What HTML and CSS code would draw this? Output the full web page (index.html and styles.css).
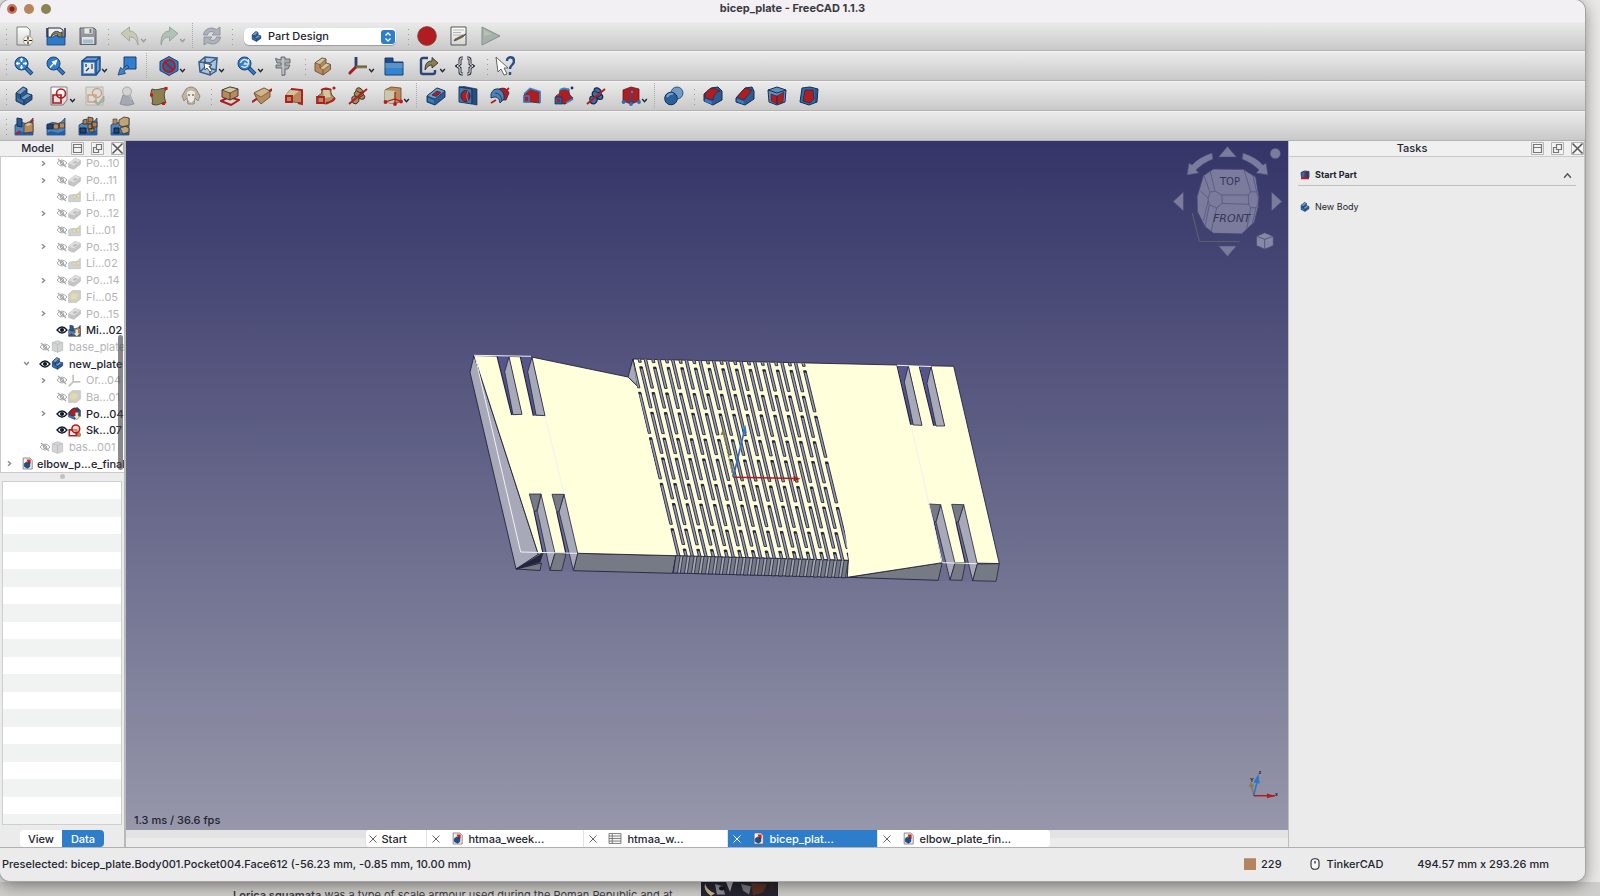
FILE: index.html
```html
<!DOCTYPE html>
<html lang="en">
<head>
<meta charset="utf-8">
<title>bicep_plate - FreeCAD 1.1.3</title>
<link rel="stylesheet" href="styles.css">
</head>
<body>
<svg class="defs" aria-hidden="true">
  <defs>
    <linearGradient id="paper" x1="0" y1="0" x2="0" y2="1"><stop offset="0" stop-color="#fff"/><stop offset="1" stop-color="#d4d4d4"/></linearGradient>
    <linearGradient id="metal" x1="0" y1="0" x2="0" y2="1"><stop offset="0" stop-color="#a2a5ad"/><stop offset="1" stop-color="#85888f"/></linearGradient>
    <symbol id="i-chev" viewBox="0 0 6 6"><path d="M1 1.700L3 4l2-2.300" fill="none" stroke="currentColor" stroke-width="1.200"/></symbol>
    <symbol id="i-x" viewBox="0 0 8 8"><path d="M.500.500l7 7M7.500.500l-7 7" fill="none" stroke="currentColor"/></symbol>
    <symbol id="i-new" viewBox="0 0 20 20"><path d="M3 1h10l3 3v15H3z" fill="url(#paper)" stroke="#666" stroke-width=".8"/><circle cx="14" cy="14.500" r="4.600" fill="#f5f3e6" stroke="#777" stroke-width=".5"/><path d="M14 10.500v8M10 14.500h8" stroke="#222" stroke-width="1.200"/><circle cx="14" cy="14.500" r="1.300" fill="#d9c98a"/></symbol>
    <symbol id="i-open" viewBox="0 0 20 20"><path d="M2 2h12l3 2v9H2z" fill="#eee" stroke="#1f2c48"/><path d="M5 11C6 5 12 4 14 7l2-1v6l-5-2 1-1c-2-2-4-1-7 2z" fill="#8d8352" stroke="#222" stroke-width=".7"/><path d="M1 11h6l2-1.500h2L12 11h7v8H1z" fill="#2c7bc8" stroke="#1f3e6a" stroke-width=".8"/><path d="M1 2v9M19 2v9" stroke="#1f2c48" stroke-width="1.500"/></symbol>
    <symbol id="i-save" viewBox="0 0 20 20"><path d="M2 2h14l2 2v14.500H2z" fill="url(#metal)" stroke="#5c6068"/><path d="M6 2h9v6H6z" fill="#e8e8e8" stroke="#777" stroke-width=".5"/><path d="M11.500 3h2v4h-2z" fill="#777"/><path d="M4 11h12v7H4z" fill="#dfe3e6"/><path d="M5 13.500h10v4H5z" fill="#a7bccb"/></symbol>
    <symbol id="i-undo" viewBox="0 0 20 20"><path d="M1 7.500L9.500 1v4c5 0 9 4 8.500 14-1.500-6-4-8-8.500-8v4z" fill="#c8cbb4" stroke="#9a9d90" stroke-width=".8"/></symbol>
    <symbol id="i-redo" viewBox="0 0 20 20"><path d="M19 7.500L10.500 1v4C5.500 5 1.500 9 2 19c1.500-6 4-8 8.500-8v4z" fill="#b0c2b7" stroke="#8e9a92" stroke-width=".8"/></symbol>
    <symbol id="i-refresh" viewBox="0 0 20 20"><path d="M1.500 9C2 3 9 0 14.500 3.500L18 1v8h-8l2.500-2.500C9 5 6.500 5.500 5.500 9zM18.500 11c-.5 6-7.500 9-13 5.500L2 19v-8h8l-2.500 2.500c3.500 1.500 6 1 7-2.500z" fill="#adb2bd" stroke="#858b98" stroke-width=".8"/></symbol>
    <symbol id="i-record" viewBox="0 0 20 20"><circle cx="10" cy="10" r="9.400" fill="#b01d20" stroke="#7c4546" stroke-width=".8"/></symbol>
    <symbol id="i-macro" viewBox="0 0 20 20"><path d="M2 1h15v18H2z" fill="url(#paper)" stroke="#555"/><path d="M4 4h11M4 6.500h8M4 9h10" stroke="#b5b5b5"/><path d="M6 13l6-3 5-2-3 3-6 3-3 1z" fill="#8a6b35" stroke="#222" stroke-width=".5"/></symbol>
    <symbol id="i-play" viewBox="0 0 20 20"><path d="M1 1l18 9L1 19z" fill="#a4b2ab" stroke="#84908a"/><path d="M3 4l8 4-8 2z" fill="#c0c0aa"/></symbol>
    <symbol id="i-lens" viewBox="0 0 20 20"><path d="M12 12l6 6" stroke="#1e3d6b" stroke-width="4"/><path d="M12 12l5.500 5.500" stroke="#2f7fce" stroke-width="2.400"/><circle cx="7.500" cy="7.500" r="6.500" fill="#2f7fce" stroke="#1e3d6b"/></symbol>
    <symbol id="i-fit" viewBox="0 0 20 20"><use href="#i-lens"/><path d="M7.500 2v11M2 7.500h11" stroke="#fff" stroke-width="1.400"/><path d="M7.500 1.800l2 2.400h-4zM7.500 13.200l2-2.400h-4zM1.800 7.500l2.400-2v4zM13.200 7.500l-2.400-2v4z" fill="#fff"/><path d="M6 6h3v3H6z" fill="#2f7fce"/></symbol>
    <symbol id="i-fitsel" viewBox="0 0 20 20"><use href="#i-lens"/><path d="M11.500 3.500L9.500 9.500 8 8l-3.500 4-1-1L7 7.200 5.500 5.700z" fill="#fff"/></symbol>
    <symbol id="i-sync" viewBox="0 0 20 20"><use href="#i-lens"/><path d="M3.500 7a4 4 0 0 1 7-2l1-1v4h-4l1-1.500M11 9a4 4 0 0 1-6.500 1" fill="none" stroke="#dbe9f5" stroke-width="1.500"/></symbol>
    <symbol id="i-viewcube" viewBox="0 0 20 20"><path d="M1 5l5-4h13v13l-5 5H1z" fill="#5f9bd4"/><path d="M3 7h10v10H3z" fill="#dfe6ee"/><path d="M1 5h14v14H1zM1 5l5-4h13v13l-4 5M15 5l4-4" fill="none" stroke="#1f4a86" stroke-width="1.500"/><path d="M5 15l3-3m3-4v5M5 8v3" stroke="#333" stroke-width="1.200"/></symbol>
    <symbol id="i-linkview" viewBox="0 0 20 20"><path d="M7 1h12v12H7z" fill="#2f7fce" stroke="#1e3d6b"/><path d="M10 9l-4.500 4-2-1.500L1 19l7.500-1.500L7 15l5-4z" fill="#3c86c9" stroke="#1e3d6b" stroke-width=".8"/></symbol>
    <symbol id="i-style" viewBox="0 0 20 20"><path d="M10 .500l9 5v9l-9 5-9-5v-9z" fill="#2f7fce" stroke="#1e3d6b"/><circle cx="10" cy="10" r="6" fill="#2b63a0" stroke="#b01d20" stroke-width="1.800"/><path d="M6 6l8 8" stroke="#b01d20" stroke-width="2"/></symbol>
    <symbol id="i-selcube" viewBox="0 0 20 20"><path d="M1 6l6-5 12 1-1 13-7 4-9-3z" fill="#a9c4de"/><path d="M1 6l11 1v12l-10-3zM1 6l6-5 12 1-7 5M19 2l-1 13-6 4M7 1v10l-5 5M7 11l11 3" fill="none" stroke="#3a5f90" stroke-width="1.500"/><path d="M6 7l8 2-3 1.500 3 4-2 1.500-3-4-2 2z" fill="#fff" stroke="#222" stroke-width=".7"/></symbol>
    <symbol id="i-caliper" viewBox="0 0 20 20"><path d="M8 1h4v2h5v4h-5v2h5l-2 4h-3v6l-3 .5V12H3V9h5V7H4L2.500 2.500 8 4z" fill="#a9abae" stroke="#5f6267" stroke-width=".9"/><path d="M10 2v16" stroke="#d5d6d8"/></symbol>
    <symbol id="i-part" viewBox="0 0 20 20"><path d="M2 7l7-5 4 1v4l4.500 1.500v5L10 19l-8-4z" fill="#b98a5c" stroke="#5c4830" stroke-width=".8"/><path d="M2 7l7-5 4 1-6 5.500zM7 12l6-5 4.500 1.500L10 14z" fill="#d0c49c" stroke="#5c4830" stroke-width=".6"/><path d="M7 8.500V12M10 14v5" stroke="#5c4830" stroke-width=".8"/></symbol>
    <symbol id="i-axis" viewBox="0 0 20 20"><path d="M8 1v10" stroke="#2b4a7c" stroke-width="2.400"/><path d="M8 11h11" stroke="#7f7747" stroke-width="2.600"/><path d="M8 11l-7 7" stroke="#b01d20" stroke-width="2.600"/><path d="M7 1v9.500L1 16M9 1v9h10" stroke="#333" stroke-width=".5" fill="none"/></symbol>
    <symbol id="i-folder" viewBox="0 0 20 20"><path d="M1 2h8v4h10v13H1z" fill="#1d4c88" stroke="#1d3a66"/><path d="M1.500 7h17v11.500h-17z" fill="#2e86d2"/><path d="M1.500 7h17v5h-17z" fill="#5a92c6"/></symbol>
    <symbol id="i-export" viewBox="0 0 20 20"><path d="M9 2H4Q2 2 2 4v12q0 2 2 2h10q2 0 2-2v-2" fill="none" stroke="#2a4877" stroke-width="2.400"/><path d="M6 14c0-6 2-9 7-9V1.500L19 7l-6 5V9c-3 0-5 2-7 5z" fill="#8a8050" stroke="#222" stroke-width=".8"/></symbol>
    <symbol id="i-braces" viewBox="0 0 20 20"><path d="M8 2H7Q5 2 5 4v4l-3 2 3 2v4q0 2 2 2h1M12 2h1q2 0 2 2v4l3 2-3 2v4q0 2-2 2h-1" fill="none" stroke="#2d3242" stroke-width="3"/><path d="M8 2H7Q5 2 5 4v4l-3 2 3 2v4q0 2 2 2h1M12 2h1q2 0 2 2v4l3 2-3 2v4q0 2-2 2h-1" fill="none" stroke="#eceef2" stroke-width="1"/></symbol>
    <symbol id="i-whats" viewBox="0 0 20 20"><path d="M12 5c0-5 7-5 7 0 0 4-4 4-4 8M15 16v3" fill="none" stroke="#2a4e86" stroke-width="2.400"/><path d="M1 1l12 11H9l3 6-3 1-3-6-3 3z" fill="#fff" stroke="#555" stroke-width=".9"/></symbol>
    <symbol id="i-body" viewBox="0 0 20 20"><path d="M2 7l7-6 4 2v4.500L18 9v4.500L10 19l-8-4z" fill="#2c5a92" stroke="#1b2d4d" stroke-width=".9"/><path d="M2 7l7-6 4 2-6.500 5.500zM6.500 12l6.500-4.500L18 9l-8 5z" fill="#6f9cc9" stroke="#1b2d4d" stroke-width=".7"/><path d="M6.500 8.500V12M10 14v5" fill="none" stroke="#1b2d4d" stroke-width=".8"/><path d="M3 12l6 3.500V17l-6-3z" fill="#2f7fce"/></symbol>
    <symbol id="i-sketch" viewBox="0 0 20 20"><path d="M2 1h16v13l-4 5H2z" fill="url(#paper)" stroke="#666" stroke-width=".8"/><path d="M4 9h8v8H4z" fill="none" stroke="#b01d20" stroke-width="1.700"/><circle cx="12" cy="7.500" r="4.500" fill="none" stroke="#b01d20" stroke-width="1.600"/></symbol>
    <symbol id="i-valid" viewBox="0 0 20 20"><path d="M1 1h17v18H1z" fill="#dcdcd6" stroke="#aaa" stroke-width=".8"/><path d="M3 9h8v7H3z" fill="none" stroke="#cf9f85" stroke-width="1.400"/><circle cx="12" cy="7" r="4.500" fill="none" stroke="#cf9f85" stroke-width="1.400"/><path d="M10 14l3 3 6-7v5l-6 4-4-3z" fill="#a3b8a2" stroke="#8b9a8b" stroke-width=".6"/></symbol>
    <symbol id="i-check" viewBox="0 0 20 20"><path d="M6 9L3 18q7 3 14 0L13 9z" fill="#a2a8b4" stroke="#868c98" stroke-width=".8"/><circle cx="10" cy="5.500" r="4.500" fill="#d3d3cf" stroke="#999" stroke-width=".8"/><path d="M12 9l3 5" stroke="#b5b5ae" stroke-width="1.500"/></symbol>
    <symbol id="i-map" viewBox="0 0 20 20"><path d="M3 3c5 2 9-1 15-1-4 5-3 9-1 15-5-1-8 4-14 1C5 12 0 9 3 3z" fill="#8a8050" stroke="#4d4830"/><path d="M15.500 1h3v3h-3zM1 7.500h3v3H1zM13 16h3v3h-3z" fill="#c4161c"/></symbol>
    <symbol id="i-clone" viewBox="0 0 20 20"><path d="M5 3q5-4 10 0l4 7-2 5-3-3-1 6H7l-1-6-3 3-2-5z" fill="#c5b39c" stroke="#8f8a84" stroke-width="1"/><path d="M6 6q4-3 8 0l-1 8-3 3-3-3z" fill="#eceae4"/><circle cx="8" cy="9" r=".9" fill="#666"/><circle cx="12" cy="9" r=".9" fill="#666"/></symbol>
    <symbol id="i-pad" viewBox="0 0 20 20"><path d="M1 15l8-4 10 3-8 5z" fill="none" stroke="#b01d20" stroke-width="2"/><path d="M2 4l8-3 8 2v7l-8 4-8-3z" fill="#b98a5c" stroke="#3c3020" stroke-width=".9"/><path d="M2 4l8-3 8 2-8 4z" fill="#d0c9a5" stroke="#3c3020" stroke-width=".7"/><path d="M10 7v7" stroke="#3c3020" stroke-width=".8"/></symbol>
    <symbol id="i-revolve" viewBox="0 0 20 20"><path d="M0 16L20 4" stroke="#b01d20" stroke-width="1.800"/><path d="M2 7l10-5 6 3v6l-9 7q-4-3-7-11z" fill="#b98a5c" stroke="#5c4830" stroke-width=".8"/><path d="M2 7l10-5 6 3-9 6z" fill="#d0b48a" stroke="#5c4830" stroke-width=".6"/><path d="M4 13l-4 3M17 5l3-2" stroke="#b01d20" stroke-width="1.800"/></symbol>
    <symbol id="i-loft" viewBox="0 0 20 20"><path d="M2 9l5-6 11 1v13l-9-1H2z" fill="#b98a5c" stroke="#5c4830" stroke-width=".8"/><path d="M2 9l5-6 9 1-7 6z" fill="#cfc6a0"/><path d="M2 10h6v6H2zM7 3l11 1v14l-4-1" fill="none" stroke="#b01d20" stroke-width="1.900"/></symbol>
    <symbol id="i-pipe" viewBox="0 0 20 20"><path d="M2 10q5-2 4-6l9-1q-1 6 4 9l-8 6-9-1z" fill="#b98a5c" stroke="#3c3020" stroke-width=".8"/><path d="M7 4l7 0q-1 4 1 7l-7 1z" fill="#cfc6a0"/><path d="M1 11h7v6H1zM5 4q5-3 10 0M10 17q7-1 9-5" fill="none" stroke="#b01d20" stroke-width="1.800"/><circle cx="18" cy="2" r="1.600" fill="#b01d20"/></symbol>
    <symbol id="i-helix" viewBox="0 0 20 20"><path d="M8 5q0-4 4-3 4 2 3 6 3 2 1 5-3 1-5-1 1 4-3 6-4 0-4-4-1-4 3-4-2-3 1-5z" fill="#a8855a" stroke="#3c3020"/><path d="M7 10q4 3 8-1M9 5q3 3 5 1" stroke="#3c3020" fill="none"/><path d="M1 18L19 3" stroke="#b01d20" stroke-width="1.900"/></symbol>
    <symbol id="i-prim" viewBox="0 0 20 20"><path d="M2 4l6-3 10 1v13l-6 3-10-2z" fill="#b98a5c" stroke="#5c4830" stroke-width=".8"/><path d="M2 4l10 1v13l-10-2z" fill="#c9c8ad"/><path d="M12 6v12M2 16l10-3 7 3" stroke="#b01d20" stroke-width="1.300" fill="none"/><circle cx="2.500" cy="16" r="1.900" fill="#c4161c"/><circle cx="12" cy="18" r="1.900" fill="#c4161c"/><circle cx="18" cy="15.500" r="1.900" fill="#c4161c"/></symbol>
    <symbol id="i-pocket" viewBox="0 0 20 20"><path d="M1 10l10-8 8 3v6l-10 8-8-3z" fill="#2c5a92" stroke="#1b2d4d" stroke-width=".9"/><path d="M1 10l10-8 8 3-10 8z" fill="#6f9cc9" stroke="#1b2d4d" stroke-width=".7"/><path d="M6 9l5-4 4 1.500-5 4z" fill="#b01d20" stroke="#1b2d4d" stroke-width=".7"/><path d="M2 12l6 2.500v3L2 15z" fill="#2f7fce"/></symbol>
    <symbol id="i-hole" viewBox="0 0 20 20"><path d="M1 1l13 2v15L1 16z" fill="#3f77b2" stroke="#1b2d4d" stroke-width=".9"/><path d="M1 1l5-.5L19 3v16l-5-1V3z" fill="#264d80" stroke="#1b2d4d" stroke-width=".7"/><ellipse cx="7.500" cy="10" rx="4.500" ry="5.500" fill="#b01d20" stroke="#1b2d4d"/><path d="M10 5q-3 5 0 10" stroke="#5b8fc4" fill="none"/></symbol>
    <symbol id="i-groove" viewBox="0 0 20 20"><path d="M9 3q7-3 10 4l-3 7-6 0z" fill="#b01d20" stroke="#1b2d4d" stroke-width=".8"/><path d="M1 8q2-6 8-5 6 3 5 10l-4 4q0-5-4-6-3 0-5 1z" fill="#4d83bb" stroke="#1b2d4d" stroke-width=".9"/><path d="M5 7q6 0 7 8" fill="none" stroke="#1b2d4d" stroke-width=".8"/><path d="M16 5l3-3M1 17l5-3" fill="none" stroke="#b01d20" stroke-width="1.800"/></symbol>
    <symbol id="i-subloft" viewBox="0 0 20 20"><path d="M2 9l6-6 10 3v11l-9-1H2z" fill="#b01d20" stroke="#1b2d4d" stroke-width=".8"/><path d="M2 8l6-5.500L18 5.500V17" fill="none" stroke="#3c86c9" stroke-width="1.600"/><path d="M2 10h5v6H2z" fill="#b01d20" stroke="#2f7fce" stroke-width="1.500"/></symbol>
    <symbol id="i-subpipe" viewBox="0 0 20 20"><path d="M2 10q5-2 4-6l9-1q-1 6 4 9l-8 6-9-1z" fill="#b01d20" stroke="#1b2d4d" stroke-width=".9"/><path d="M6 4q4-3 9 0M12 17l7-4" fill="none" stroke="#3c86c9" stroke-width="2"/><path d="M1 11h7v7H1z" fill="#2b5e98" stroke="#1b2d4d" stroke-width=".7"/><path d="M3 13h3v3H3z" fill="#b01d20"/><circle cx="18" cy="2" r="1.400" fill="#234"/></symbol>
    <symbol id="i-subhelix" viewBox="0 0 20 20"><path d="M8 5q0-4 4-3 4 2 3 6 3 2 1 5-3 1-5-1 1 4-3 6-4 0-4-4-1-4 3-4-2-3 1-5z" fill="#3a6ea8" stroke="#14233f" stroke-width="1.200"/><path d="M7 10q4 3 8-1M9 5q3 3 5 1" stroke="#14233f" fill="none"/><path d="M1 18L19 3" stroke="#b01d20" stroke-width="1.900"/></symbol>
    <symbol id="i-subprim" viewBox="0 0 20 20"><path d="M2 4l8-3 8 2v12l-8 3-8-3z" fill="#b01d20" stroke="#52202c" stroke-width=".8"/><path d="M10 6v12M2 16l8-2 8 2" stroke="#27518a" stroke-width="1.200" fill="none"/><circle cx="11" cy="6" r="1.200" fill="#3c86c9"/><circle cx="2.500" cy="16" r="1.900" fill="#2d6fb3"/><circle cx="10" cy="18" r="1.900" fill="#2d6fb3"/><circle cx="18" cy="16" r="1.900" fill="#2d6fb3"/></symbol>
    <symbol id="i-bool" viewBox="0 0 20 20"><circle cx="13" cy="7" r="6" fill="#6f9cc4" stroke="#2c4a74" stroke-width=".9"/><circle cx="7" cy="12.500" r="6.300" fill="#2b5f9c" stroke="#1b2d4d"/><path d="M3 11q2-4 6-3" stroke="#6fa5d8" stroke-width="2" fill="none"/></symbol>
    <symbol id="i-fillet" viewBox="0 0 20 20"><path d="M1 8l7-6 7-1 4 4v9l-9 5-9-4z" fill="#2c5a92" stroke="#1b2d4d"/><path d="M2 9q2-6 8-7l7 3q-6 2-7 9l-8-2z" fill="#b01d20" stroke="#1b2d4d" stroke-width=".7"/><path d="M2 14l7 3" stroke="#2f7fce" stroke-width="2.500"/></symbol>
    <symbol id="i-chamfer" viewBox="0 0 20 20"><path d="M1 12l9-10 7-1 2 4v8l-9 6-9-3z" fill="#2c5a92" stroke="#1b2d4d"/><path d="M2 11l8-9 7 2-8 10z" fill="#b01d20" stroke="#1b2d4d" stroke-width=".7"/><path d="M2 14l7 3" stroke="#2f7fce" stroke-width="2.500"/></symbol>
    <symbol id="i-draft" viewBox="0 0 20 20"><path d="M1 4l9-3 9 3-1 12-8 3-8-3z" fill="#5f8fc0" stroke="#1b2d4d"/><path d="M4 8l6 2v8l-6-3zM10 10l7-4-1 10-6 2z" fill="#b01d20" stroke="#1b2d4d" stroke-width=".6"/><path d="M1 4l9 3 9-3" fill="none" stroke="#1b2d4d"/></symbol>
    <symbol id="i-thick" viewBox="0 0 20 20"><path d="M3 2l8-1 8 2-1 13-8 3-9-3z" fill="#2f6cab" stroke="#1b2d4d"/><path d="M6 4h8l1 9-4 4-7-2z" fill="#b01d20" stroke="#1b2d4d" stroke-width=".8"/><path d="M17 3v14" stroke="#1f3f70"/></symbol>
    <symbol id="i-base" viewBox="0 0 20 20"><path d="M1 9q5-4 9-2t9-5v17H1z" fill="#4d86be" stroke="#1f3558" stroke-width=".7"/><path d="M1 17q4-3 8-1t10-2v5H1z" fill="#1f5ea8"/></symbol>
    <symbol id="i-mirror" viewBox="0 0 20 20"><use href="#i-base"/><path d="M3 2l5 1v8l-5-1z" fill="#2a5a94" stroke="#1b2d4d"/><path d="M10 9l4-3 5 1v9l-9 1z" fill="#b98a5c" stroke="#3c3020" stroke-width=".7"/><path d="M11 9l4-2 3 1-4 2z" fill="#d0c9a5"/><path d="M2 18l4-3M17 6l2-2" stroke="#c4161c" stroke-width="1.800"/></symbol>
    <symbol id="i-linpat" viewBox="0 0 20 20"><use href="#i-base"/><path d="M1 8h6v5H1z" fill="#22416e" stroke="#111c33" stroke-width=".6"/><path d="M7.500 8h5v5h-5zM13.500 7h5v5h-5z" fill="#b98a5c" stroke="#3c3020" stroke-width=".7"/></symbol>
    <symbol id="i-polpat" viewBox="0 0 20 20"><use href="#i-base"/><g fill="#a8835a" stroke="#33291c" stroke-width=".8"><path d="M5 4l4-1v5H5zM10 1l5 1v4h-5zM14 6h5v5h-5zM10 8h4v5h-4zM11 13l5-1v4h-5z"/></g><path d="M2 12h6v5H2z" fill="#1f477c" stroke="#111c33"/></symbol>
    <symbol id="i-multi" viewBox="0 0 20 20"><use href="#i-base"/><path d="M9 4l5-3 5 1v7l-6 2-4-2zM10 12l5-2 4 2v4l-6 2z" fill="#c0a377" stroke="#3c3020" stroke-width=".8"/><path d="M3 3h4v5H3z" fill="#b98a5c" stroke="#3c3020" stroke-width=".6"/><path d="M4 12h5v5H4z" fill="#1f477c" stroke="#111c33"/></symbol>
    <symbol id="i-eye" viewBox="0 0 12 10"><path d="M1 5q5-6 10 0-5 6-10 0z" fill="none" stroke="#111827" stroke-width="1.300"/><circle cx="6" cy="5" r="2.100" fill="#111827"/></symbol>
    <symbol id="i-eyeoff" viewBox="0 0 12 10"><path d="M1 5q5-6 10 0-5 6-10 0z" fill="none" stroke="#a9a9a9"/><circle cx="6" cy="5" r="1.700" fill="none" stroke="#a9a9a9"/><path d="M2 1l8 8" stroke="#a9a9a9" stroke-width="1.200"/></symbol>
    <symbol id="i-gpocket" viewBox="0 0 20 20"><path d="M1 10l10-8 8 3v6l-10 8-8-3z" fill="#c3c6c9" stroke="#b4b4b4"/><path d="M1 10l10-8 8 3-10 8z" fill="#dcdee0"/><path d="M7 9l4-3 4 1.500-5 3z" fill="#c7b8ae"/></symbol>
    <symbol id="i-gpat" viewBox="0 0 20 20"><path d="M1 9q5-3 9-2t9-5v16H1z" fill="#cfd2d5" stroke="#bcbcbc"/><path d="M8 8h4v5H8zM14 7h4v5h-4z" fill="#efe2a4" stroke="#c8c2a2"/></symbol>
    <symbol id="i-gfillet" viewBox="0 0 20 20"><path d="M1 6l6-5h12v13l-6 5H1z" fill="#cfcfc9" stroke="#b4b4b4"/><path d="M3 11l4-6 8 1-2 7-6 2z" fill="#e6dba6"/></symbol>
    <symbol id="i-gbody" viewBox="0 0 20 20"><path d="M2 4l8-3 8 3v12l-8 3-8-3z" fill="#d2d4d6" stroke="#b5b5b5"/><path d="M2 4l8 3 8-3M10 7v12" fill="none" stroke="#b5b5b5"/></symbol>
    <symbol id="i-gaxis" viewBox="0 0 20 20"><path d="M8 1v11h11M8 12l-7 7" fill="none" stroke="#c3c3bd" stroke-width="2.600"/></symbol>
    <symbol id="i-doc" viewBox="0 0 14 16"><path d="M1.500 1H10l3 3v11H1.500z" fill="#f2f2f2" stroke="#666" stroke-width=".9"/><path d="M6 3h5v5L8 9z" fill="#c4261f"/><path d="M3 8l3-2 4 2v4l-3 2-4-2z" fill="#1f4f8d" stroke="#142645" stroke-width=".7"/></symbol>
    <symbol id="i-sheet" viewBox="0 0 14 12"><path d="M.500.500h13v11H.500zM.500 3.300h13M.500 6h13M.500 8.800h13M4 .500v11" fill="#f5f5f5" stroke="#777"/></symbol>
    <symbol id="i-tip" viewBox="0 0 20 20"><path d="M11 8h5v6h3l-5.500 5.500L8 14h3z" fill="#eee8d0" stroke="#6d5b3c" stroke-width=".9"/></symbol>
    <symbol id="i-dock" viewBox="0 0 13 13"><path d="M.500.500h12v12H.500z" fill="#f3f3f3" stroke="#b5b5b5"/><path d="M2.500 2.500h8v8h-8zM2.500 5.500h8" fill="none" stroke="#767676" stroke-width="1.200"/></symbol>
    <symbol id="i-float" viewBox="0 0 13 13"><path d="M.500.500h12v12H.500z" fill="#f3f3f3" stroke="#b5b5b5"/><path d="M5.500 2.500h5v5h-5zM5 5.500H2.500v5h5V8" fill="none" stroke="#767676" stroke-width="1.200"/></symbol>
    <symbol id="i-close" viewBox="0 0 13 13"><path d="M.500.500h12v12H.500z" fill="#f3f3f3" stroke="#b5b5b5"/><path d="M1.500 1.500l10 10M11.500 1.500l-10 10" stroke="#555" stroke-width="1.500"/></symbol>
  </defs>
</svg>

<article class="behind">
  <p><b>Lorica squamata</b> was a type of scale armour used during the Roman Republic and at</p>
  <svg class="photo" viewBox="0 0 77 20" preserveAspectRatio="none" aria-hidden="true"><path d="M0 0h77v20H0z" fill="#262430"/><path d="M4 2q2 10 10 14l-4 4Q2 12 4 2z" fill="#c9b48a"/><path d="M14 3l8 3 2 12h-8z" fill="#8a8c92"/><circle cx="21" cy="9" r="3" fill="#17161d"/><path d="M25 0h7l-3 14z" fill="#a5a6a8"/><path d="M40 3l10 3-2 12-6-6z" fill="#77787e"/><path d="M50 1l16 2-4 12-10 4z" fill="#5c3226"/><path d="M68 2l6 3-3 12z" fill="#3d2420"/></svg>
</article>

<div class="window">
  <header class="titlebar">
    <div class="lights"><button class="light close" aria-label="Close"></button><button class="light" aria-label="Minimize"></button><button class="light zoom" aria-label="Zoom"></button></div>
    <h1>bicep_plate - FreeCAD 1.1.3</h1>
  </header>

  <div class="toolbar" role="toolbar" aria-label="File">
    <i class="grip first"></i>
    <button class="tool" aria-label="New"><svg><use href="#i-new"/></svg></button>
    <button class="tool" aria-label="Open"><svg><use href="#i-open"/></svg></button>
    <button class="tool" aria-label="Save"><svg><use href="#i-save"/></svg></button>
    <i class="grip"></i>
    <button class="tool menu off" aria-label="Undo"><svg><use href="#i-undo"/></svg><svg class="chev"><use href="#i-chev"/></svg></button>
    <button class="tool menu off" aria-label="Redo"><svg><use href="#i-redo"/></svg><svg class="chev"><use href="#i-chev"/></svg></button>
    <i class="sep"></i>
    <button class="tool" aria-label="Refresh"><svg><use href="#i-refresh"/></svg></button>
    <i class="grip"></i>
    <div class="workbench">
      <svg class="wb-icon"><use href="#i-body"/></svg>
      <select aria-label="Workbench"><option>Part Design</option></select>
      <svg class="wb-step" viewBox="0 0 14 14"><rect width="14" height="14" rx="3" fill="#2d7dca"/><path d="M4.500 5.500L7 3l2.500 2.500M4.500 8.500L7 11l2.500-2.500" fill="none" stroke="#fff" stroke-width="1.400"/></svg>
    </div>
    <i class="grip"></i>
    <button class="tool" aria-label="Record macro"><svg><use href="#i-record"/></svg></button>
    <button class="tool" aria-label="Macros"><svg><use href="#i-macro"/></svg></button>
    <button class="tool" aria-label="Execute macro"><svg><use href="#i-play"/></svg></button>
  </div>

  <div class="toolbar" role="toolbar" aria-label="View">
    <i class="grip first"></i>
    <button class="tool" aria-label="Fit all"><svg><use href="#i-fit"/></svg></button>
    <button class="tool" aria-label="Fit selection"><svg><use href="#i-fitsel"/></svg></button>
    <button class="tool menu" aria-label="Standard views"><svg><use href="#i-viewcube"/></svg><svg class="chev"><use href="#i-chev"/></svg></button>
    <button class="tool" aria-label="Align to selection"><svg><use href="#i-linkview"/></svg></button>
    <i class="sep"></i>
    <button class="tool menu" aria-label="Draw style"><svg><use href="#i-style"/></svg><svg class="chev"><use href="#i-chev"/></svg></button>
    <button class="tool menu" aria-label="Selection view"><svg><use href="#i-selcube"/></svg><svg class="chev"><use href="#i-chev"/></svg></button>
    <button class="tool menu" aria-label="Tree sync"><svg><use href="#i-sync"/></svg><svg class="chev"><use href="#i-chev"/></svg></button>
    <button class="tool" aria-label="Measure"><svg><use href="#i-caliper"/></svg></button>
    <i class="grip first"></i>
    <button class="tool" aria-label="Create part"><svg><use href="#i-part"/></svg></button>
    <button class="tool menu" aria-label="Create datum"><svg><use href="#i-axis"/></svg><svg class="chev"><use href="#i-chev"/></svg></button>
    <button class="tool" aria-label="Create group"><svg><use href="#i-folder"/></svg></button>
    <button class="tool menu" aria-label="Make link"><svg><use href="#i-export"/></svg><svg class="chev"><use href="#i-chev"/></svg></button>
    <button class="tool" aria-label="Variable set"><svg><use href="#i-braces"/></svg></button>
    <i class="grip first"></i>
    <button class="tool" aria-label="What's this"><svg><use href="#i-whats"/></svg></button>
  </div>

  <div class="toolbar" role="toolbar" aria-label="Part Design">
    <i class="grip first"></i>
    <button class="tool" aria-label="New body"><svg><use href="#i-body"/></svg></button>
    <button class="tool menu" aria-label="New sketch"><svg><use href="#i-sketch"/></svg><svg class="chev"><use href="#i-chev"/></svg></button>
    <button class="tool" aria-label="Validate sketch"><svg><use href="#i-valid"/></svg></button>
    <button class="tool" aria-label="Check geometry"><svg><use href="#i-check"/></svg></button>
    <button class="tool" aria-label="Shape binder"><svg><use href="#i-map"/></svg></button>
    <button class="tool" aria-label="Clone"><svg><use href="#i-clone"/></svg></button>
    <i class="grip"></i>
    <button class="tool" aria-label="Pad"><svg><use href="#i-pad"/></svg></button>
    <button class="tool" aria-label="Revolution"><svg><use href="#i-revolve"/></svg></button>
    <button class="tool" aria-label="Loft"><svg><use href="#i-loft"/></svg></button>
    <button class="tool" aria-label="Pipe"><svg><use href="#i-pipe"/></svg></button>
    <button class="tool" aria-label="Helix"><svg><use href="#i-helix"/></svg></button>
    <button class="tool menu" aria-label="Additive primitive"><svg><use href="#i-prim"/></svg><svg class="chev"><use href="#i-chev"/></svg></button>
    <i class="sep"></i>
    <button class="tool" aria-label="Pocket"><svg><use href="#i-pocket"/></svg></button>
    <button class="tool" aria-label="Hole"><svg><use href="#i-hole"/></svg></button>
    <button class="tool" aria-label="Groove"><svg><use href="#i-groove"/></svg></button>
    <button class="tool" aria-label="Subtractive loft"><svg><use href="#i-subloft"/></svg></button>
    <button class="tool" aria-label="Subtractive pipe"><svg><use href="#i-subpipe"/></svg></button>
    <button class="tool" aria-label="Subtractive helix"><svg><use href="#i-subhelix"/></svg></button>
    <button class="tool menu" aria-label="Subtractive primitive"><svg><use href="#i-subprim"/></svg><svg class="chev"><use href="#i-chev"/></svg></button>
    <i class="sep"></i>
    <button class="tool" aria-label="Boolean"><svg><use href="#i-bool"/></svg></button>
    <i class="grip"></i>
    <button class="tool" aria-label="Fillet"><svg><use href="#i-fillet"/></svg></button>
    <button class="tool" aria-label="Chamfer"><svg><use href="#i-chamfer"/></svg></button>
    <button class="tool" aria-label="Draft"><svg><use href="#i-draft"/></svg></button>
    <button class="tool" aria-label="Thickness"><svg><use href="#i-thick"/></svg></button>
  </div>

  <div class="toolbar" role="toolbar" aria-label="Patterns">
    <i class="grip first"></i>
    <button class="tool" aria-label="Mirrored"><svg><use href="#i-mirror"/></svg></button>
    <button class="tool" aria-label="Linear pattern"><svg><use href="#i-linpat"/></svg></button>
    <button class="tool" aria-label="Polar pattern"><svg><use href="#i-polpat"/></svg></button>
    <button class="tool" aria-label="Multi transform"><svg><use href="#i-multi"/></svg></button>
  </div>

  <main class="work">
    <aside class="dock model">
      <header class="dock-head"><h2>Model</h2>
        <button aria-label="Dock"><svg><use href="#i-dock"/></svg></button><button aria-label="Float"><svg><use href="#i-float"/></svg></button><button aria-label="Close panel"><svg><use href="#i-close"/></svg></button></header>
      <div class="tree">
        <ul>
          <li class="l2 off"><svg class="tw"><use href="#i-chev"/></svg><svg class="eye"><use href="#i-eyeoff"/></svg><svg class="ic"><use href="#i-gpocket"/></svg>Po...10</li>
          <li class="l2 off"><svg class="tw"><use href="#i-chev"/></svg><svg class="eye"><use href="#i-eyeoff"/></svg><svg class="ic"><use href="#i-gpocket"/></svg>Po...11</li>
          <li class="l2 off"><i class="tw"></i><svg class="eye"><use href="#i-eyeoff"/></svg><svg class="ic"><use href="#i-gpat"/></svg>Li...rn</li>
          <li class="l2 off"><svg class="tw"><use href="#i-chev"/></svg><svg class="eye"><use href="#i-eyeoff"/></svg><svg class="ic"><use href="#i-gpocket"/></svg>Po...12</li>
          <li class="l2 off"><i class="tw"></i><svg class="eye"><use href="#i-eyeoff"/></svg><svg class="ic"><use href="#i-gpat"/></svg>Li...01</li>
          <li class="l2 off"><svg class="tw"><use href="#i-chev"/></svg><svg class="eye"><use href="#i-eyeoff"/></svg><svg class="ic"><use href="#i-gpocket"/></svg>Po...13</li>
          <li class="l2 off"><i class="tw"></i><svg class="eye"><use href="#i-eyeoff"/></svg><svg class="ic"><use href="#i-gpat"/></svg>Li...02</li>
          <li class="l2 off"><svg class="tw"><use href="#i-chev"/></svg><svg class="eye"><use href="#i-eyeoff"/></svg><svg class="ic"><use href="#i-gpocket"/></svg>Po...14</li>
          <li class="l2 off"><i class="tw"></i><svg class="eye"><use href="#i-eyeoff"/></svg><svg class="ic"><use href="#i-gfillet"/></svg>Fi...05</li>
          <li class="l2 off"><svg class="tw"><use href="#i-chev"/></svg><svg class="eye"><use href="#i-eyeoff"/></svg><svg class="ic"><use href="#i-gpocket"/></svg>Po...15</li>
          <li class="l2"><i class="tw"></i><svg class="eye"><use href="#i-eye"/></svg><svg class="ic"><use href="#i-mirror"/><use href="#i-tip"/></svg>Mi...02</li>
          <li class="l1 off"><i class="tw"></i><svg class="eye"><use href="#i-eyeoff"/></svg><svg class="ic"><use href="#i-gbody"/></svg>base_plate</li>
          <li class="l1"><svg class="tw open"><use href="#i-chev"/></svg><svg class="eye"><use href="#i-eye"/></svg><svg class="ic"><use href="#i-body"/></svg>new_plate</li>
          <li class="l2 off"><svg class="tw"><use href="#i-chev"/></svg><svg class="eye"><use href="#i-eyeoff"/></svg><svg class="ic"><use href="#i-gaxis"/></svg>Or...04</li>
          <li class="l2 off"><i class="tw"></i><svg class="eye"><use href="#i-eyeoff"/></svg><svg class="ic"><use href="#i-gfillet"/></svg>Ba...01</li>
          <li class="l2"><svg class="tw"><use href="#i-chev"/></svg><svg class="eye"><use href="#i-eye"/></svg><svg class="ic"><use href="#i-fillet"/><use href="#i-tip"/></svg>Po...04</li>
          <li class="l2"><i class="tw"></i><svg class="eye"><use href="#i-eye"/></svg><svg class="ic" viewBox="0 0 20 20"><path d="M11 10l8 9" stroke="#b98a5c" stroke-width="7"/><path d="M2 9h11v9H2z" fill="none" stroke="#b01d20" stroke-width="2.500"/><circle cx="12" cy="7.500" r="6" fill="#e8c5b0" fill-opacity=".6" stroke="#b01d20" stroke-width="2.400"/></svg>Sk...07</li>
          <li class="l1 off"><i class="tw"></i><svg class="eye"><use href="#i-eyeoff"/></svg><svg class="ic"><use href="#i-gbody"/></svg>bas...001</li>
          <li class="l0"><svg class="tw"><use href="#i-chev"/></svg><svg class="docic"><use href="#i-doc"/></svg>elbow_p...e_final</li>
        </ul>
        <i class="thumb"></i>
      </div>
      <div class="splitter"><i></i></div>
      <div class="props"></div>
      <div class="modes"><button>View</button><button class="on">Data</button></div>
    </aside>

    <section class="center">
      <div class="view3d">
        <svg class="scene" viewBox="126 141 1162 689" preserveAspectRatio="xMidYMid slice" role="img" aria-label="Perforated plate">
          <defs>
            <clipPath id="top"><path d="M633 359L810 363.500 830 420 849 561 676 556 637 387z"/></clipPath>
            <g id="pair">
              <path d="M627.500 346.800h2.500l9.900 41h-2.500zM638.300 392.300h2.500l9.900 41h-2.500zM649.200 437.800h2.500l9.900 41h-2.500zM660 483.300h2.500l9.900 41h-2.500zM670.900 528.800h2.500l9.900 41h-2.500z"/>
              <path d="M628.900 321.300h2.500l9.900 41h-2.500zM639.700 366.800h2.500l9.900 41h-2.500zM650.600 412.300h2.500l9.900 41h-2.500zM661.400 457.900h2.500l9.900 41h-2.500zM672.300 503.500h2.500l9.900 41h-2.500zM683.100 549h2.500l9.900 41h-2.500z"/>
              <path d="M638.300 392.300h2.500l.5 2h-2.500zM649.200 437.800h2.500l.5 2h-2.500zM660 483.300h2.500l.5 2h-2.500zM670.900 528.800h2.500l.5 2h-2.500zM639.700 366.800h2.500l.5 2h-2.500zM650.600 412.300h2.500l.5 2h-2.500zM661.400 457.900h2.500l.5 2h-2.500zM672.300 503.500h2.500l.5 2h-2.500zM683.100 549h2.500l.5 2h-2.500z" fill="#23243a" stroke="none"/>
            </g>
            <path id="tooth" d="M676 555.600h4.200l-2.700 17.400h-4.200z"/>
          </defs>
          <g stroke="#23243c" stroke-width=".9" stroke-linejoin="round">
            <path d="M474 355.500L470 372.300 516 569 538.300 554.300z" fill="#a8a9b8"/>
            <path d="M516 569L540 570.500 541.500 563z" fill="#757a85"/>
            <path d="M516 569L542.700 553.700 540 562z" fill="#23243a"/>
            <path d="M577.700 553.300L676 555.700 672.700 573.300 573.300 570.700z" fill="#757a85"/>
            <path d="M676 555.600L848.300 560.300 847.300 577.500 673.300 573z" fill="#a2a4b4"/>
            <path d="M847.300 577.300L942.300 562.700 938.300 580.300z" fill="#757a85"/>
            <path d="M474 355.500L531.500 357 628 377 638 386.500 633 359 953.700 366.300 999.300 563.500 942.300 562.700 847.300 577.300 848.300 560.300 676 555.700 577.700 553.300 542.700 553.300 538.300 554.300z" fill="#ffffdc"/>
            <path d="M633 359L628 377 638 386.500z" fill="#a8a9b8"/>
          </g>
          <!-- end slots: see-through opening, then inner walls -->
          <g fill="#55558a">
            <path d="M497 355L509 356 522 414.300 511.700 415z"/><path d="M520.300 355L532 356.500 545 415.700 533.300 415.700z"/>
            <path d="M897 363L908.300 364 922 425.300 910.700 424.700z"/><path d="M919.300 364L931 364.500 944.700 426 933.700 425.700z"/>
          </g>
          <g fill="#6d6d90">
            <path d="M534 511h3L547.500 554.500 543 555zM556.700 511.700h3L570 555 566 555zM934 521.700h2L949 563.500 942.700 563.500zM956 522h2.300L971 563.700 965.300 563.700z"/>
            <path d="M543.500 552.800H555L550 570.800 541.300 570.800zM566.500 552.800H577L573.300 571.300 562.300 571.300zM943 562.500H955L950 581 938.800 581zM966 562.700H977L972.500 581.500 962.500 581.500z"/>
          </g>
          <g stroke="#23243c" stroke-width=".8" stroke-linejoin="round">
            <g fill="#a8a9b8">
              <path d="M509 356.700L504.700 371.700 513 414.700 522 414.300z"/><path d="M532 357.300L527.700 371.700 536 415 545 415.700z"/>
              <path d="M908.300 366L904.300 382 913.300 425 922 425.300z"/><path d="M931 366.700L927 383.300 936 426 944.700 426z"/>
              <path d="M541 494L555 553.300 550 570.300 537.300 511z"/><path d="M564 494.300L577.700 553.300 573.300 570.300 559 511.700z"/>
              <path d="M940.700 504.700L955 563.300 950 580 936 521.700z"/><path d="M963.700 504.700L977.300 564 972.700 580.700 958.300 522z"/>
            </g>
            <g fill="#757a85">
              <path d="M529.300 494H541L536.700 511H534z"/><path d="M552 494.300H564L559 511.700H556.700z"/>
              <path d="M929 504L940.700 504.700 936 521.700H934z"/><path d="M951.700 504.300L963.700 504.700 958.300 522H956z"/>
              <path d="M555 553.300L566 554 561.700 570.700 550 570.300z"/>
              <path d="M955 563.300L965.300 563.300 962 580.300 950 580z"/><path d="M977.300 564L999.300 563.700 996 581.300 972.700 580.700z"/>
            </g>
            <path d="M497 356L511.700 415M520.300 356.700L533.300 415.700M897 365.300L910.700 424.700M919.300 366.300L933.700 425.700M534 511L543 553.500M556.700 511.700L566 554M934 521.700L942.300 562.700M956 522L965.300 563.300" fill="none" stroke-width="1.200"/>
          </g>
          <g clip-path="url(#top)"><g fill="#9a9cac" stroke="#23243c" stroke-width=".9">
            <use href="#pair" x="0" y="0"/><use href="#pair" x="13.650" y=".3"/><use href="#pair" x="27.300" y=".6"/><use href="#pair" x="41" y="1"/><use href="#pair" x="54.600" y="1.300"/><use href="#pair" x="68.300" y="1.600"/><use href="#pair" x="82" y="2"/><use href="#pair" x="95.600" y="2.300"/><use href="#pair" x="109.300" y="2.600"/><use href="#pair" x="123" y="3"/><use href="#pair" x="136.600" y="3.300"/><use href="#pair" x="150.200" y="3.600"/><use href="#pair" x="163.900" y="4"/>
          </g></g>
          <g fill="#757a85" stroke="#23243c" stroke-width=".8">
            <use href="#tooth"/><use href="#tooth" x="7" y=".2"/><use href="#tooth" x="14" y=".4"/><use href="#tooth" x="21" y=".6"/><use href="#tooth" x="28" y=".8"/><use href="#tooth" x="35" y="1"/><use href="#tooth" x="42" y="1.200"/><use href="#tooth" x="49" y="1.400"/><use href="#tooth" x="56" y="1.600"/><use href="#tooth" x="63" y="1.800"/><use href="#tooth" x="70" y="2"/><use href="#tooth" x="77" y="2.200"/><use href="#tooth" x="84" y="2.400"/><use href="#tooth" x="91" y="2.600"/><use href="#tooth" x="98" y="2.800"/><use href="#tooth" x="105" y="3"/><use href="#tooth" x="112" y="3.200"/><use href="#tooth" x="119" y="3.400"/><use href="#tooth" x="126" y="3.600"/><use href="#tooth" x="133" y="3.800"/><use href="#tooth" x="140" y="4"/><use href="#tooth" x="147" y="4.200"/><use href="#tooth" x="154" y="4.400"/><use href="#tooth" x="161" y="4.600"/><use href="#tooth" x="168" y="4.800"/>
          </g>
          <path d="M475 356L520.700 552 577 553.300M474 355.300L531 356.300M545 416L564 494M897 365.300L931 366.500M911 425L929 504 942.300 562.700 977 563.700" fill="none" stroke="#f1f1f6" stroke-width="1"/>
          <path d="M733.300 477L723.500 433" stroke="#857c4c" stroke-width="1.600" stroke-dasharray="3 1"/><path d="M720.500 435l2-5 4 4.500z" fill="#857c4c"/>
          <path d="M733.300 477L744.500 430" stroke="#2a70bd" stroke-width="1.600"/><path d="M742 432l3.300-7 1.500 8z" fill="#2a78c8"/>
          <path d="M733.300 477.200L797 478.600" stroke="#b01d20" stroke-width="1.500"/><path d="M793.500 476l7 2.800-7 2.700z" fill="#b01d20"/>
        </svg>

        <svg class="navcube" viewBox="1170 141 118 125" role="img" aria-label="Navigation cube">
          <g fill="#7b7b9e" stroke="#4a4a70" stroke-width=".6">
            <path d="M1227.500 146.500l9 10.500h-18z"/><path d="M1227.500 256.500l9-10.500h-18z"/><path d="M1173 201.500l10.500-9.500v19z"/><path d="M1282 201.500l-10.500-9.500v19z"/>
            <circle cx="1275.300" cy="153.500" r="5.200"/>
            <path d="M1212 153q-13 4-20 12l-3-2-2 12 12-2-3-3q7-7 17-11z"/><path d="M1243 153q13 4 20 12l3-2 2 12-12-2 3-3q-7-7-17-11z"/>
          </g>
          <path d="M1213.300 169L1243.300 169.300 1255.700 177 1259 196.700 1258.300 206.700 1254.300 222.300 1241.700 234 1213.300 233.300 1205 226.700 1197.300 211.700 1197 196.700 1203.300 175.700z" fill="#7b7b9e" stroke="#46466e" stroke-width=".9"/>
          <path d="M1210 192.300l5-1.300 6.700 4 .6 8.300-5.600 4.400-7.400-2.700-1.300-6zM1248.300 195l2.400-3.300 6 .3 1.600 6-.3 6-2 3.700h-5.300l-2-3.400zM1221.700 195h26.600M1222.300 203.500l26.400.8M1215 191l-5-20.500M1210 192.300l-6-16.600M1250.700 191.700l-6.700-22M1256.700 192l-4-17M1216.700 207.700l-5.700 24M1209.300 205l-4.300 21.700M1250.700 207.700l-4 21.500M1256 207.700l-3.500 15.500M1208 198l-7.500-7M1208 201l-4.500 20" fill="none" stroke="#50507a" stroke-width=".7"/>
          <text x="1220" y="185" class="face">TOP</text><text x="1213" y="222" class="face front">FRONT</text>
          <path d="M1192.300 213l7 28.500h40.500" fill="none" stroke="#5a5f68" stroke-width="1.200"/>
          <path d="M1264.700 232.700l-8.300 3.600v9.300l8.300 3.600 8.600-3.600v-9.300zM1256.400 236.300l8.300 3 8.600-3M1264.700 239.300v10" fill="#8787a8" stroke="#4a4a70" stroke-width=".8"/>
        </svg>

        <svg class="axes" viewBox="1244 766 40 34" aria-hidden="true">
          <path d="M1253.700 795.700L1251.500 785" stroke="#857c4c" stroke-width="1.500"/><path d="M1248.800 787l2-5 3.500 4.500z" fill="#857c4c"/>
          <path d="M1253.700 795.700L1257 782" stroke="#2a78c8" stroke-width="1.600"/><path d="M1253.500 782.500l4.800-8.500 1.500 9.500z" fill="#2a78c8"/>
          <path d="M1253.700 795.700H1275" stroke="#b01d20" stroke-width="1.500"/><path d="M1267 793.500l8 2.500-8 2.300z" fill="#b01d20"/>
          <text x="1275" y="796">x</text><text x="1250" y="782">Y</text><text x="1258.500" y="774">z</text>
        </svg>
        <p class="fps">1.3 ms / 36.6 fps</p>
      </div>
      <nav class="tabs">
        <div class="tab t-start"><button class="x" aria-label="Close tab"><svg><use href="#i-x"/></svg></button><button class="name">Start</button></div>
        <div class="tab t-week"><button class="x" aria-label="Close tab"><svg><use href="#i-x"/></svg></button><svg class="docic"><use href="#i-doc"/></svg><button class="name">htmaa_week...</button></div>
        <div class="tab t-w"><button class="x" aria-label="Close tab"><svg><use href="#i-x"/></svg></button><svg class="sheetic"><use href="#i-sheet"/></svg><button class="name">htmaa_w...</button></div>
        <div class="tab t-bicep on"><button class="x" aria-label="Close tab"><svg><use href="#i-x"/></svg></button><svg class="docic"><use href="#i-doc"/></svg><button class="name">bicep_plat...</button></div>
        <div class="tab t-elbow"><button class="x" aria-label="Close tab"><svg><use href="#i-x"/></svg></button><svg class="docic"><use href="#i-doc"/></svg><button class="name">elbow_plate_fin...</button></div>
      </nav>
    </section>

    <aside class="dock tasks">
      <header class="dock-head"><h2>Tasks</h2>
        <button aria-label="Dock"><svg><use href="#i-dock"/></svg></button><button aria-label="Float"><svg><use href="#i-float"/></svg></button><button aria-label="Close panel"><svg><use href="#i-close"/></svg></button></header>
      <div class="task-body">
        <button class="task-head"><svg viewBox="0 0 20 20"><path d="M2 5l7-3 9 1v12H3z" fill="#2c6db0" stroke="#14233f" stroke-width="1.500"/><path d="M10 4h7v12h-7z" fill="#23416e"/><path d="M10 5v13M2 17h16" stroke="#c4161c" stroke-width="3"/></svg><span>Start Part</span><svg class="fold" viewBox="0 0 8 8"><path d="M1 6l3-3.500L7 6" fill="none" stroke="#555" stroke-width="1.300"/></svg></button>
        <button class="task"><svg><use href="#i-body"/></svg>New Body</button>
      </div>
    </aside>
  </main>

  <footer class="status">
    <span class="msg">Preselected: bicep_plate.Body001.Pocket004.Face612 (-56.23 mm, -0.85 mm, 10.00 mm)</span>
    <button class="count"><i></i>229</button>
    <button class="navstyle"><svg viewBox="0 0 10 12"><rect x="1" y=".700" width="8" height="10.600" rx="3.500" fill="#f7f7f7" stroke="#2a2d3a" stroke-width="1.100"/><path d="M5 3v2.500" stroke="#2a2d3a" stroke-width="1.300"/></svg>TinkerCAD</button>
    <span class="dims">494.57 mm x 293.26 mm</span>
  </footer>
</div>
</body>
</html>
```
FILE: styles.css
```css
* { box-sizing: border-box; }
body {
  margin: 0;
  height: 100vh;
  overflow: hidden;
  position: relative;
  background: #e9e8e7;
  font: 500 11px/16px Inter, "Liberation Sans", sans-serif;
  color: #22242f;
}
h1, h2, p, ul { margin: 0; padding: 0; }
button { border: 0; padding: 0; margin: 0; background: none; font: inherit; color: inherit; }
svg { display: block; flex: none; }
.defs { position: absolute; width: 0; height: 0; }

/* page lying under the application window */
.behind {
  position: absolute;
  left: 0; right: 0; bottom: 0;
  height: 14px;
  overflow: hidden;
  background: #cfcecb;
}
.behind p { position: absolute; left: 233px; top: 5px; font-weight: 400; white-space: nowrap; color: #3c3c42; }
.behind b { font-weight: 600; }
.photo { position: absolute; left: 701px; top: 0; width: 77px; height: 14px; }

.window {
  position: relative;
  display: flex;
  flex-direction: column;
  width: calc(100% - 15px);
  height: calc(100vh - 15px);
  border-radius: 10px;
  overflow: hidden;
  background: #ebebeb;
  box-shadow: 0 0 0 1px #a4a4a4, 0 4px 16px rgba(0, 0, 0, .45);
}

.titlebar { position: relative; height: 21px; background: #f3f0f3; }
.titlebar h1 { font-size: 11px; line-height: 17px; font-weight: 700; text-align: center; color: #3a3941; }
.lights { position: absolute; left: 7px; top: 4px; display: flex; gap: 7px; }
.light { width: 10px; height: 10px; border-radius: 50%; background: #b9835c; }
.light.close { background: radial-gradient(circle, #8c1d1d 0 2px, #b9795a 3px); }
.light.zoom { background: #8b8452; }

.toolbar {
  display: flex;
  align-items: center;
  height: 30px;
  border-top: 1px solid #f3f3f3;
  border-bottom: 1px solid #b2b2b2;
  background: linear-gradient(#ebebeb, #c9c9c9);
}
.grip, .sep { width: 7px; height: 18px; flex: none; background: radial-gradient(circle, #999 0 1px, transparent 1px) 3px 0 / 3px 5px repeat-y; }
.grip.first { width: 8px; background-position-x: 5px; }
.sep { height: 26px; background: repeating-linear-gradient(#aaa 0 1px, transparent 1px 2px) 3px 0 / 1px 100% no-repeat; }
.tool { display: flex; align-items: center; width: 32px; height: 26px; padding: 0 6px; flex: none; }
.tool svg { width: 20px; height: 20px; }
.tool.menu { width: 39px; padding: 0 4px 0 9px; }
.tool .chev { width: 7px; height: 7px; margin-top: 8px; color: #1f2433; }
.tool.off .chev { color: #9a9a9e; }
.workbench { position: relative; margin: 0 8px 0 9px; width: 152px; height: 17px; }
.workbench select {
  appearance: none;
  display: block;
  width: 100%; height: 17px;
  padding: 0 18px 0 24px;
  border: 0; border-radius: 5px;
  background: #fff;
  box-shadow: 0 1px 1px rgba(0, 0, 0, .25);
  font: inherit; line-height: 17px; color: #222430;
}
.wb-icon { position: absolute; left: 7px; top: 3px; width: 11px; height: 11px; }
.wb-step { position: absolute; right: 1px; top: 2px; width: 14px; height: 14px; }

.work { flex: 1; min-height: 0; display: grid; grid-template-columns: 126px 1fr 297px; }
.dock { display: flex; flex-direction: column; min-height: 0; }
.dock-head { display: flex; align-items: center; gap: 7px; height: 16px; padding-left: 11px; background: #f0f0f0; border-bottom: 1px solid #c9c9c9; }
.dock-head h2 { flex: 1; font-size: 11px; line-height: 15px; font-weight: 500; text-align: center; }
.dock-head svg { width: 13px; height: 13px; }
.model { border-right: 2px solid #b9b9b9; }

.tree { position: relative; height: 315px; overflow: hidden; background: #fff; border-left: 1px solid #ccc; }
.tree ul { display: flex; flex-direction: column; height: 317px; margin-top: -2px; list-style: none; }
.tree li { flex: 1; display: flex; align-items: center; white-space: nowrap; }
.tree li.off { color: #b4b4b6; font-weight: 400; }
.l0 { padding-left: 5px; }
.l1 { padding-left: 22px; }
.l2 { padding-left: 39px; }
.tw { width: 7px; height: 7px; flex: none; margin-right: 6px; color: #8a8a8e; transform: rotate(-90deg); }
.tw.open { transform: none; }
.eye { width: 12px; height: 10px; margin-left: 4px; }
.ic { width: 13px; height: 13px; margin-right: 5px; }
.l1 .eye, .l2 .eye { margin-left: 3px; }
.docic { width: 11px; height: 13px; }
.l0 .docic { margin: 0 4px 0 3px; }
.thumb { position: absolute; right: 1px; top: 178px; bottom: 2px; width: 5px; border-radius: 3px; background: rgba(70, 70, 78, .65); }
.splitter { height: 9px; background: #ececec; border-top: 1px solid #c9c9c9; }
.splitter i { display: block; width: 5px; height: 5px; margin: 1px auto 0; border-radius: 50%; background: #c2c2c2; }
.props { flex: 1; margin: 0 2px; border: 1px solid #cfcfcf; background: linear-gradient(#fff 50%, #f1f2f2 50%) 0 0 / 100% 35px; }
.modes { display: flex; justify-content: center; height: 22px; padding-top: 5px; }
.modes button { width: 42px; height: 17px; background: #fff; border-radius: 4px 0 0 4px; line-height: 18px; }
.modes .on { background: #2d7dca; color: #fff; border-radius: 0 4px 4px 0; }

.center { display: flex; flex-direction: column; min-width: 0; }
.view3d { position: relative; flex: 1; min-height: 0; overflow: hidden; background: linear-gradient(#343468, #9697aa); }
.scene { position: absolute; inset: 0; width: 100%; height: 100%; }
.navcube { position: absolute; top: 0; right: 0; width: 118px; height: 125px; }
.face { font: 500 10px "DejaVu Sans", sans-serif; fill: #35355a; }
.face.front { font-size: 11px; font-style: oblique; }
.axes { position: absolute; right: 4px; bottom: 30px; width: 40px; height: 34px; }
.axes text { font: 700 5px Inter, sans-serif; fill: #222; }
.fps { position: absolute; left: 8px; bottom: 2px; }
.tabs { display: flex; justify-content: center; height: 17px; background: linear-gradient(#e3e3e3 50%, #ebebeb 50%); }
.tab { display: flex; align-items: center; padding-left: 5px; background: #fff; border-left: 1px solid #e2e2e2; line-height: 18px; white-space: nowrap; }
.tab .x { width: 8px; height: 8px; margin-right: 5px; color: #666; }
.tab .x svg { width: 8px; height: 8px; }
.tab .docic { margin: 0 6px 0 7px; }
.tab .sheetic { margin: 0 6px; }
.sheetic { width: 14px; height: 11px; }
.t-start { width: 61px; border-radius: 4px 0 0 4px; padding-left: 3px; }
.t-week { width: 157px; }
.t-w { width: 144px; }
.t-bicep { width: 150px; }
.t-elbow { width: 173px; border-radius: 0 4px 4px 0; }
.tab.on, .tab.on .x { background: #2d7dca; color: #fff; }

.tasks { border-left: 1px solid #bdbdbd; border-right: 1px solid #c4c4c4; }
.task-body { padding: 10px 8px 0 9px; display: flex; flex-direction: column; gap: 13px; font-size: 9px; font-weight: 400; }
.task-head, .task { display: flex; align-items: center; gap: 5px; padding-left: 2px; height: 16px; text-align: left; }
.task-head { height: 19px; padding-right: 4px; padding-bottom: 2px; border-bottom: 1px solid #c0c0c0; font-weight: 700; }
.task-head span { flex: 1; }
.task-head svg, .task svg { width: 10px; height: 10px; }
.task-head .fold { width: 9px; height: 9px; }

.status { display: flex; align-items: center; height: 34px; padding: 0 36px 1px 2px; border-top: 1px solid #b0b0b0; background: #ebebeb; white-space: nowrap; }
.msg { flex: 1; }
.count, .navstyle { display: flex; align-items: center; }
.count { gap: 5px; }
.count i { width: 12px; height: 12px; background: #b5835e; border-top: 1px solid #a4a4a4; }
.navstyle { gap: 7px; margin: 0 34px 0 28px; }
.navstyle svg { width: 10px; height: 12px; }
```
